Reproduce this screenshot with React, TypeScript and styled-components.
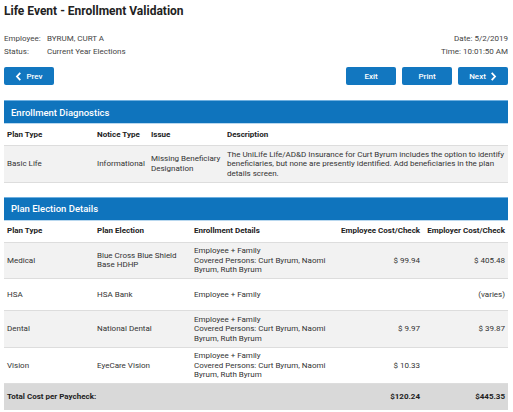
import React from 'react';
import { styled, createGlobalStyle } from 'styled-components';

const GlobalStyle = createGlobalStyle`
  html, body {
    margin: 0;
    padding: 0;
    background: #ffffff;
  }
  body {
    font-family: Roboto, "Liberation Sans", Arial, sans-serif;
    color: #333333;
  }
`;

interface Election {
  planType: string;
  planElection: string;
  details: string[];
  employeeCost: string;
  employerCost: string;
}

const elections: Election[] = [
  {
    planType: 'Medical',
    planElection: 'Blue Cross Blue Shield Base HDHP',
    details: ['Employee + Family', 'Covered Persons: Curt Byrum, Naomi Byrum, Ruth Byrum'],
    employeeCost: '$ 99.94',
    employerCost: '$ 405.48',
  },
  {
    planType: 'HSA',
    planElection: 'HSA Bank',
    details: ['Employee + Family'],
    employeeCost: '',
    employerCost: '(varies)',
  },
  {
    planType: 'Dental',
    planElection: 'National Dental',
    details: ['Employee + Family', 'Covered Persons: Curt Byrum, Naomi Byrum, Ruth Byrum'],
    employeeCost: '$ 9.97',
    employerCost: '$ 39.87',
  },
  {
    planType: 'Vision',
    planElection: 'EyeCare Vision',
    details: ['Employee + Family', 'Covered Persons: Curt Byrum, Naomi Byrum, Ruth Byrum'],
    employeeCost: '$ 10.33',
    employerCost: '',
  },
];

const Chevron: React.FC<{ dir: 'left' | 'right' }> = ({ dir }) => (
  <svg width="7" height="9" viewBox="0 0 7 10">
    <path
      d={dir === 'left' ? 'M5.5 1 L1.8 5 L5.5 9' : 'M1.5 1 L5.2 5 L1.5 9'}
      fill="none"
      stroke="#fff"
      strokeWidth="2"
    />
  </svg>
);

export default function App() {
  return (
    <>
      <GlobalStyle />
      <Page>
        <Title>Life Event - Enrollment Validation</Title>
        <InfoRow>
          <InfoGrid>
            <span>Employee:</span>
            <span>BYRUM, CURT A</span>
            <span>Status:</span>
            <span>Current Year Elections</span>
          </InfoGrid>
          <Stamp>
            <span>Date: 5/2/2019</span>
            <span>Time: 10:01:50 AM</span>
          </Stamp>
        </InfoRow>
        <Toolbar>
          <Button>
            <Chevron dir="left" />
            Prev
          </Button>
          <ButtonGroup>
            <Button>Exit</Button>
            <Button>Print</Button>
            <Button>
              Next
              <Chevron dir="right" />
            </Button>
          </ButtonGroup>
        </Toolbar>

        <Panel>
          <PanelHeader>Enrollment Diagnostics</PanelHeader>
          <Table>
            <colgroup>
              <col style={{ width: 90 }} />
              <col style={{ width: 54 }} />
              <col style={{ width: 76 }} />
              <col />
            </colgroup>
            <thead>
              <tr>
                <Th>Plan Type</Th>
                <Th>Notice Type</Th>
                <Th>Issue</Th>
                <Th>Description</Th>
              </tr>
            </thead>
            <tbody>
              <Row $shaded>
                <Td>Basic Life</Td>
                <Td>Informational</Td>
                <Td>Missing Beneficiary Designation</Td>
                <Td>
                  The UniLife Life/AD&amp;D Insurance for Curt Byrum includes the option to identify
                  beneficiaries, but none are presently identified. Add beneficiaries in the plan
                  details screen.
                </Td>
              </Row>
            </tbody>
          </Table>
        </Panel>

        <Panel>
          <PanelHeader>Plan Election Details</PanelHeader>
          <Table>
            <colgroup>
              <col style={{ width: 90 }} />
              <col style={{ width: 97 }} />
              <col style={{ width: 147 }} />
              <col style={{ width: 85 }} />
              <col />
            </colgroup>
            <thead>
              <tr>
                <Th>Plan Type</Th>
                <Th>Plan Election</Th>
                <Th>Enrollment Details</Th>
                <Th $right>Employee Cost/Check</Th>
                <Th $right>Employer Cost/Check</Th>
              </tr>
            </thead>
            <tbody>
              {elections.map((e, i) => (
                <Row key={e.planType} $shaded={i % 2 === 0}>
                  <Td>{e.planType}</Td>
                  <Td>{e.planElection}</Td>
                  <Td>
                    {e.details.map((d) => (
                      <div key={d}>{d}</div>
                    ))}
                  </Td>
                  <Td $right>{e.employeeCost}</Td>
                  <Td $right>{e.employerCost}</Td>
                </Row>
              ))}
              <TotalRow>
                <TotalCell colSpan={3}>Total Cost per Paycheck:</TotalCell>
                <TotalCell $right>$120.24</TotalCell>
                <TotalCell $right>$445.35</TotalCell>
              </TotalRow>
            </tbody>
          </Table>
        </Panel>
      </Page>
    </>
  );
}

const Page = styled.div`
  width: 504px;
  padding: 3px 5px 0 4px;
  font-size: 8px;
`;

const Title = styled.h1`
  margin: 0;
  font-size: 12px;
  font-weight: 700;
  line-height: 16px;
  color: #222222;
`;

const InfoRow = styled.div`
  display: flex;
  justify-content: space-between;
  margin-top: 13px;
  line-height: 13px;
  color: #444444;
`;

const InfoGrid = styled.div`
  display: grid;
  grid-template-columns: 43px auto;
`;

const Stamp = styled.div`
  display: flex;
  flex-direction: column;
  align-items: flex-end;
`;

const Toolbar = styled.div`
  display: flex;
  justify-content: space-between;
  margin-top: 9px;
  padding-bottom: 15px;
`;

const ButtonGroup = styled.div`
  display: flex;
  gap: 6px;
`;

const Button = styled.button`
  display: flex;
  align-items: center;
  justify-content: center;
  gap: 4px;
  width: 50px;
  height: 18px;
  padding: 0;
  border: none;
  border-radius: 2px;
  background: #1277c0;
  color: #ffffff;
  font-family: Roboto, "Liberation Sans", Arial, sans-serif;
  font-size: 8px;
  font-weight: 500;
`;

const Panel = styled.section`
  margin-bottom: 14px;
`;

const PanelHeader = styled.div`
  height: 22px;
  display: flex;
  align-items: center;
  padding-left: 7px;
  background: #0f74bd;
  border-top: 1px solid #6fb0e0;
  border-bottom: 1px solid #b9d8ef;
  color: #ffffff;
  font-size: 9.5px;
  font-weight: 500;
`;

const Table = styled.table`
  width: 100%;
  table-layout: fixed;
  border-collapse: collapse;
  font-size: 8px;
  line-height: 9.5px;
  color: #333333;
`;

const Th = styled.th<{ $right?: boolean }>`
  height: 21px;
  padding: 0 3px;
  white-space: nowrap;
  text-align: ${(p) => (p.$right ? 'right' : 'left')};
  font-weight: 700;
  color: #222222;
  border-bottom: 1px solid #dddddd;
`;

const Row = styled.tr<{ $shaded?: boolean }>`
  background: ${(p) => (p.$shaded ? '#f2f2f2' : '#ffffff')};
  border-bottom: 1px solid #dddddd;
`;

const Td = styled.td<{ $right?: boolean }>`
  height: 24px;
  padding: 3.5px 3px;
  vertical-align: middle;
  text-align: ${(p) => (p.$right ? 'right' : 'left')};
`;

const TotalRow = styled.tr`
  background: #d9d9d9;
`;

const TotalCell = styled.td<{ $right?: boolean }>`
  height: 26px;
  padding: 0 3px;
  font-weight: 700;
  color: #222222;
  text-align: ${(p) => (p.$right ? 'right' : 'left')};
`;
